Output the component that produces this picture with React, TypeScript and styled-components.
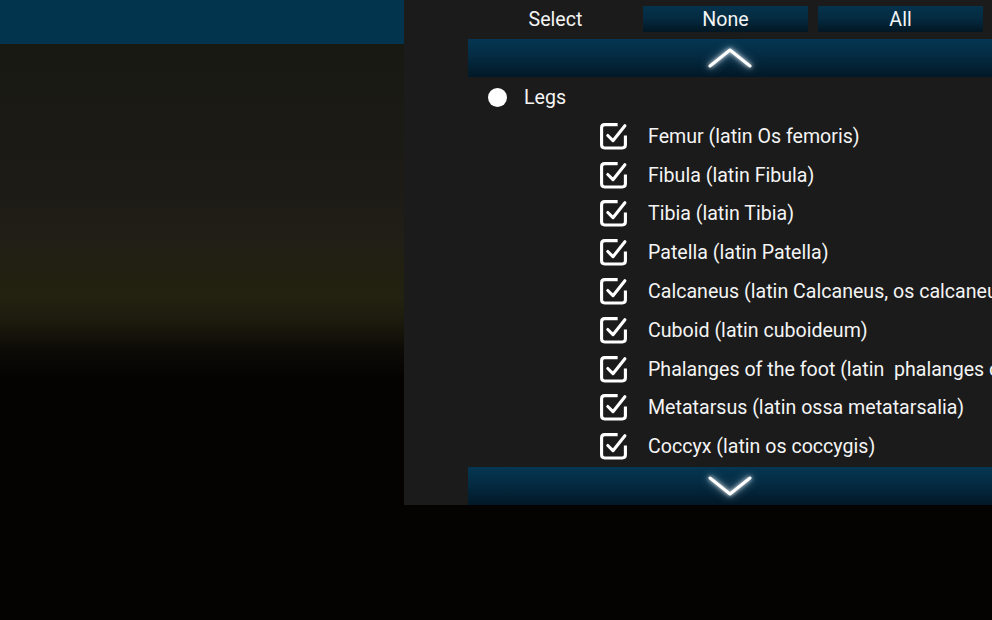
import styled, { createGlobalStyle } from "styled-components";

const GlobalStyle = createGlobalStyle`
  html, body {
    margin: 0;
    padding: 0;
    background: #050302;
    font-family: Roboto, "Liberation Sans", Arial, sans-serif;
  }
`;

const Screen = styled.div`
  display: flex;
  width: 992px;
  height: 620px;
  overflow: hidden;
  background: #050302;
`;

const SceneColumn = styled.div`
  width: 404px;
  flex-shrink: 0;
  display: flex;
  flex-direction: column;
`;

const TopBar = styled.div`
  height: 44px;
  background: #03344d;
`;

const Scene = styled.div`
  flex: 1;
  background: linear-gradient(
    to bottom,
    #191913 0%,
    #1c1b15 25%,
    #211e17 33%,
    #22200f 41%,
    #23210f 44%,
    #1d1b0d 48%,
    #0d0b06 53%,
    #050302 58%,
    #050302 100%
  );
`;

const MenuColumn = styled.div`
  flex: 1;
  min-width: 0;
  display: flex;
  flex-direction: column;
`;

const Panel = styled.div`
  height: 505px;
  background: #1b1b1b;
  display: flex;
  flex-direction: column;
  overflow: hidden;
`;

const Header = styled.div`
  height: 39px;
  padding: 6px 9px 0 64px;
  box-sizing: border-box;
  display: flex;
  align-items: flex-start;
`;

const Label = styled.div`
  width: 175px;
  height: 26px;
  display: flex;
  align-items: center;
  justify-content: center;
  color: #f4f4f4;
  font-size: 19.6px;
`;

const ButtonGroup = styled.div`
  display: flex;
  gap: 10px;
`;

const SelectButton = styled.div`
  width: 165px;
  height: 26px;
  display: flex;
  align-items: center;
  justify-content: center;
  color: #f4f4f4;
  font-size: 19.6px;
  background: linear-gradient(to bottom, #05334c 0%, #042a40 50%, #021622 100%);
`;

const ScrollBar = styled.div`
  height: 38px;
  margin-left: 64px;
  display: flex;
  align-items: center;
  justify-content: center;
  background: linear-gradient(to bottom, #053652 0%, #042b42 45%, #021826 100%);
`;

const Chevron = styled.svg`
  width: 46px;
  height: 26px;
  filter: drop-shadow(0 0 2px rgba(255, 255, 255, 0.9))
    drop-shadow(0 0 4px rgba(200, 230, 255, 0.5));
`;

const List = styled.div`
  flex: 1;
  padding-left: 64px;
  display: flex;
  flex-direction: column;
  overflow: hidden;
`;

const GroupRow = styled.div`
  height: 40px;
  display: flex;
  align-items: center;
  padding-left: 20px;
  gap: 17px;
  color: #f4f4f4;
  font-size: 19.6px;
`;

const Dot = styled.span`
  width: 19px;
  height: 19px;
  border-radius: 50%;
  background: #ffffff;
  flex-shrink: 0;
`;

const ItemRow = styled.div`
  height: 38.8px;
  display: flex;
  align-items: center;
  padding-left: 131px;
  gap: 20px;
  color: #f4f4f4;
  font-size: 19.6px;
  white-space: pre;
`;

const Check = styled.svg`
  width: 29px;
  height: 29px;
  flex-shrink: 0;
  margin-top: -2px;
`;

const items = [
  "Femur (latin Os femoris)",
  "Fibula (latin Fibula)",
  "Tibia (latin Tibia)",
  "Patella (latin Patella)",
  "Calcaneus (latin Calcaneus, os calcaneus)",
  "Cuboid (latin cuboideum)",
  "Phalanges of the foot (latin  phalanges ossium pedis)",
  "Metatarsus (latin ossa metatarsalia)",
  "Coccyx (latin os coccygis)",
];

const CheckIcon = () => (
  <Check viewBox="0 0 28 28" fill="none" stroke="#ffffff" strokeWidth={3}>
    <path
      d="M18 3.5 H5.5 Q2.5 3.5 2.5 6.5 V23 Q2.5 26 5.5 26 H22.5 Q25.5 26 25.5 23 V14"
      strokeLinejoin="round"
    />
    <path
      d="M8.5 14 L13.5 19 L25 4.5"
      strokeLinecap="round"
      strokeLinejoin="round"
    />
  </Check>
);

const Arrow = ({ up }: { up: boolean }) => (
  <Chevron viewBox="0 0 46 26" fill="none" stroke="#ffffff" strokeWidth={3}>
    <path
      d={up ? "M3 21 L23 5 L43 21" : "M3 5 L23 21 L43 5"}
      strokeLinecap="round"
      strokeLinejoin="round"
    />
  </Chevron>
);

export default function App() {
  return (
    <Screen>
      <GlobalStyle />
      <SceneColumn>
        <TopBar />
        <Scene />
      </SceneColumn>
      <MenuColumn>
        <Panel>
          <Header>
            <Label>Select</Label>
            <ButtonGroup>
              <SelectButton>None</SelectButton>
              <SelectButton>All</SelectButton>
            </ButtonGroup>
          </Header>
          <ScrollBar>
            <Arrow up />
          </ScrollBar>
          <List>
            <GroupRow>
              <Dot />
              Legs
            </GroupRow>
            {items.map((item) => (
              <ItemRow key={item}>
                <CheckIcon />
                {item}
              </ItemRow>
            ))}
          </List>
          <ScrollBar>
            <Arrow up={false} />
          </ScrollBar>
        </Panel>
      </MenuColumn>
    </Screen>
  );
}
